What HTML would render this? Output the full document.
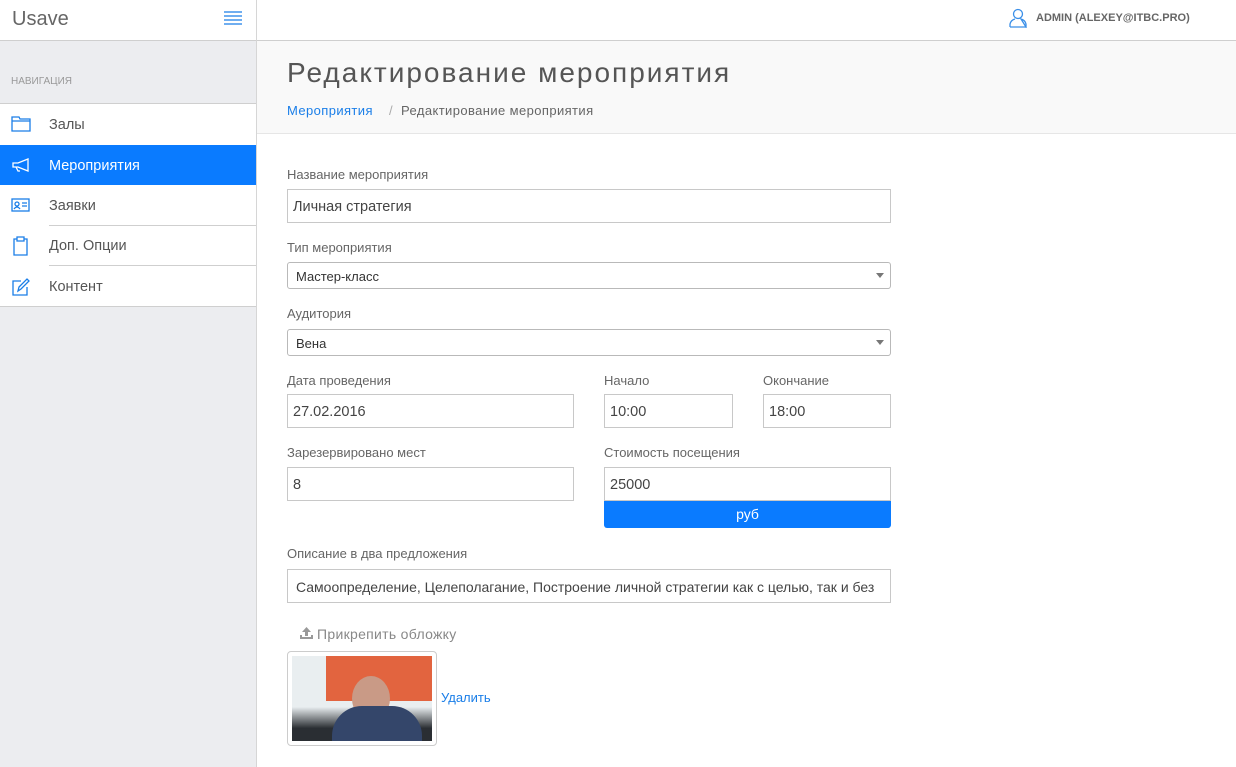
<!DOCTYPE html>
<html><head><meta charset="utf-8"><style>
*{box-sizing:border-box;margin:0;padding:0}
body{width:1236px;height:767px;overflow:hidden;font-family:"Liberation Sans",sans-serif;background:#fff;position:relative;color:#555}
.abs{position:absolute}
.sb{left:0;top:0;width:257px;height:767px;background:#ecedf0;border-right:1px solid #d6d6d6}
.logo{left:0;top:0;width:256px;height:41px;background:#fff;border-bottom:1px solid #cfcfcf}
.top{left:257px;top:0;width:979px;height:41px;background:#fff;border-bottom:1px solid #cfcfcf}
.nav{left:0;top:103px;width:256px;height:204px;background:#fff;border-top:1px solid #cfcfcf;border-bottom:1px solid #cfcfcf}
.it{position:absolute;left:0;width:256px;height:40px;font-size:14.5px;color:#555;line-height:42px;padding-left:49px}
.it svg{position:absolute;left:11px;top:11px}
.sep{position:absolute;left:49px;width:207px;height:1px;background:#cfcfcf}
.hd{left:257px;top:41px;width:979px;height:93px;background:#f9f9f9;border-bottom:1px solid #e6e6e6}
.lbl{position:absolute;font-size:13px;color:#666}
.inp{position:absolute;border:1px solid #c8c8c8;height:34px;font-size:14.5px;color:#444;line-height:34px;padding-left:5px;background:#fff;white-space:nowrap;overflow:hidden}
.sel{position:absolute;border:1px solid #b9b9b9;border-radius:3px;height:27px;font-size:13px;color:#333;line-height:27px;padding-left:8px;background:#fff}
.sel:after{content:"";position:absolute;right:6px;top:10px;border-left:4px solid transparent;border-right:4px solid transparent;border-top:5px solid #777}
</style></head><body>
<div class="abs sb"></div>
<div class="abs logo"><span class="abs" style="left:12px;top:8px;font-size:20px;color:#666">Usave</span>
<svg class="abs" style="left:224px;top:11px" width="18" height="14"><g stroke="#1a7ee8" stroke-width="1.2"><line x1="0" y1="1" x2="18" y2="1"/><line x1="0" y1="5" x2="18" y2="5"/><line x1="0" y1="9" x2="18" y2="9"/><line x1="0" y1="13" x2="18" y2="13"/></g></svg></div>
<div class="abs top">
<svg class="abs" style="left:751px;top:8px" width="20" height="20" fill="none" stroke="#3a8fe8" stroke-width="1.3"><circle cx="10" cy="6" r="4.5"/><path d="M2 19 L2 16 Q3 12 7 11 M13 11 Q17 12 18 16 L18 19 Z M2 19 H18"/></svg>
<span class="abs" style="left:779px;top:12px;font-size:11px;font-weight:bold;color:#666">ADMIN (ALEXEY@ITBC.PRO)</span></div>
<div class="abs" style="left:11px;top:76px;font-size:10px;color:#999">НАВИГАЦИЯ</div>
<div class="abs nav">
<div class="it" style="top:0"><svg width="20" height="18" fill="none" stroke="#1a7ee8" stroke-width="1.3"><path d="M1 2H8L9 4H19V16H1Z M1 6H19"/></svg>Залы</div>
<div class="it" style="top:41px;background:#0a7bff;color:#fff"><svg width="20" height="18" fill="none" stroke="#fff" stroke-width="1.3"><path d="M2 7H7L17 3V15L7 11H2Z M5 11L7 15H9"/></svg>Мероприятия</div>
<div class="it" style="top:81px"><svg width="20" height="18" fill="none" stroke="#1a7ee8" stroke-width="1.3"><rect x="1" y="3" width="17" height="12"/><circle cx="6" cy="8" r="2"/><path d="M3 13Q6 9 9 13 M11 7H16 M11 10H16"/></svg>Заявки</div>
<div class="sep" style="top:121px"></div>
<div class="it" style="top:121px"><svg width="20" height="20" fill="none" stroke="#1a7ee8" stroke-width="1.3"><path d="M6 3H3V19H16V3H13 M6 1H13V5H6Z"/></svg>Доп. Опции</div>
<div class="sep" style="top:161px"></div>
<div class="it" style="top:162px"><svg width="20" height="20" fill="none" stroke="#1a7ee8" stroke-width="1.3"><path d="M10 4H2V18H16V10 M7 14L8 10L16 2L18 4L10 12Z"/></svg>Контент</div>
</div>
<div class="abs hd"><div class="abs" style="left:30px;top:16px;font-size:28px;color:#555;letter-spacing:2px">Редактирование мероприятия</div>
<div class="abs" style="left:30px;top:62px;font-size:13px;color:#666;letter-spacing:0.4px"><span style="color:#1a7ee8">Мероприятия</span>&nbsp;&nbsp;&nbsp;&nbsp;<span style="color:#aaa">/</span>&nbsp; Редактирование мероприятия</div></div>
<div class="lbl" style="left:287px;top:167px">Название мероприятия</div>
<div class="inp" style="left:287px;top:189px;width:604px">Личная стратегия</div>
<div class="lbl" style="left:287px;top:240px">Тип мероприятия</div>
<div class="sel" style="left:287px;top:262px;width:604px">Мастер-класс</div>
<div class="lbl" style="left:287px;top:306px">Аудитория</div>
<div class="sel" style="left:287px;top:329px;width:604px">Вена</div>
<div class="lbl" style="left:287px;top:373px">Дата проведения</div>
<div class="lbl" style="left:604px;top:373px">Начало</div>
<div class="lbl" style="left:763px;top:373px">Окончание</div>
<div class="inp" style="left:287px;top:394px;width:287px">27.02.2016</div>
<div class="inp" style="left:604px;top:394px;width:129px">10:00</div>
<div class="inp" style="left:763px;top:394px;width:128px">18:00</div>
<div class="lbl" style="left:287px;top:445px">Зарезервировано мест</div>
<div class="lbl" style="left:604px;top:445px">Стоимость посещения</div>
<div class="inp" style="left:287px;top:467px;width:287px">8</div>
<div class="inp" style="left:604px;top:467px;width:287px">25000</div>
<div class="abs" style="left:604px;top:501px;width:287px;height:27px;background:#0a7bff;border-radius:0 0 3px 3px;color:#fff;font-size:14px;text-align:center;line-height:27px">руб</div>
<div class="lbl" style="left:287px;top:546px">Описание в два предложения</div>
<div class="inp" style="left:287px;top:569px;width:604px;padding-left:8px;font-size:14px">Самоопределение, Целеполагание, Построение личной стратегии как с целью, так и без</div>
<svg class="abs" style="left:300px;top:627px" width="13" height="12" fill="#999"><path d="M6.5 0L11 5H8V9H5V5H2Z M0 8H2V10H11V8H13V12H0Z"/></svg>
<div class="abs" style="left:317px;top:626px;font-size:14px;color:#888;letter-spacing:0.3px">Прикрепить обложку</div>
<div class="abs" style="left:287px;top:651px;width:150px;height:95px;border:1px solid #ccc;border-radius:4px;background:#fff"></div>
<div class="abs" style="left:292px;top:656px;width:140px;height:85px;background:linear-gradient(180deg,#e9eef0 0,#e9eef0 60%,#2a2e33 85%);overflow:hidden">
<div class="abs" style="left:34px;top:0;width:106px;height:45px;background:#e2643f"></div>
<div class="abs" style="left:60px;top:20px;width:38px;height:45px;border-radius:50%;background:#c99a86"></div>
<div class="abs" style="left:40px;top:50px;width:90px;height:40px;border-radius:30px 30px 0 0;background:#34466a"></div>
</div>
<div class="abs" style="left:441px;top:690px;font-size:13px;color:#1a7ee8">Удалить</div>
</body></html>
